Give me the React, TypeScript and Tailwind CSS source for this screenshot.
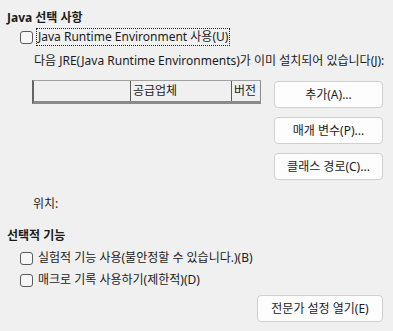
import React from "react";

const font = {
  fontFamily: '"Segoe UI", "Noto Sans", "Noto Sans CJK KR", sans-serif',
};

function Checkbox({ label, focus }: { label: string; focus?: boolean }) {
  return (
    <div className="flex items-center h-[22px] pl-[13px]">
      <div className="w-[13px] h-[13px] rounded-[3px] border border-[#5c5c5c] bg-[#f6f6f6] shrink-0" />
      <span
        className={
          "ml-[3px] px-[1px] leading-[16px] " +
          (focus ? "border border-dotted border-[#222]" : "border border-transparent")
        }
      >
        {label}
      </span>
    </div>
  );
}

function Btn({ label, w }: { label: string; w: string }) {
  return (
    <div
      className={
        "h-[27px] rounded-[4px] border border-[#d0d0d0] bg-[#fdfdfd] flex items-center justify-center text-[#1b1b1b] " +
        w
      }
    >
      {label}
    </div>
  );
}

export default function App() {
  return (
    <div
      className="w-[393px] h-[331px] bg-[#f0f0f0] text-[12px] text-[#1b1b1b] overflow-hidden flex flex-col pl-[7px] pr-[10px] pt-[9px]"
      style={font}
    >
      <div className="font-bold h-[17px] leading-[17px]">Java 선택 사항</div>
      <div>
        <Checkbox label="Java Runtime Environment 사용(U)" focus />
      </div>
      <div className="pl-[27px] mt-[2px] h-[22px] leading-[22px] whitespace-nowrap">
        다음 JRE(Java Runtime Environments)가 이미 설치되어 있습니다(J):
      </div>
      <div className="flex mt-[8px] pl-[25px]">
        <div className="w-[229px] flex flex-col">
          <div className="h-[24px] flex border-l-2 border-l-[#646464] border-t border-t-[#a0a0a0] border-r border-r-[#8a8a8a] border-b-[3px] border-b-[#8a8a8a]">
            <div className="w-[97px] border-r border-r-[#5a5a5a]" />
            <div className="w-[101px] border-r border-r-[#5a5a5a] pl-[2px] leading-[20px]">공급업체</div>
            <div className="flex-1 pl-[2px] leading-[20px]">버전</div>
          </div>
        </div>
        <div className="ml-auto mt-[1px] flex flex-col gap-[9px]">
          <Btn label="추가(A)..." w="w-[109px]" />
          <Btn label="매개 변수(P)..." w="w-[109px]" />
          <Btn label="클래스 경로(C)..." w="w-[109px]" />
        </div>
      </div>
      <div className="pl-[26px] mt-[16px] h-[16px] leading-[16px]">위치:</div>
      <div className="font-bold mt-[15px] h-[17px] leading-[17px]">선택적 기능</div>
      <div className="mt-[3px]">
        <Checkbox label="실험적 기능 사용(불안정할 수 있습니다.)(B)" />
        <Checkbox label="매크로 기록 사용하기(제한적)(D)" />
      </div>
      <div className="flex justify-end mt-[4px]">
        <Btn label="전문가 설정 열기(E)" w="w-[126px] h-[26px]" />
      </div>
    </div>
  );
}
